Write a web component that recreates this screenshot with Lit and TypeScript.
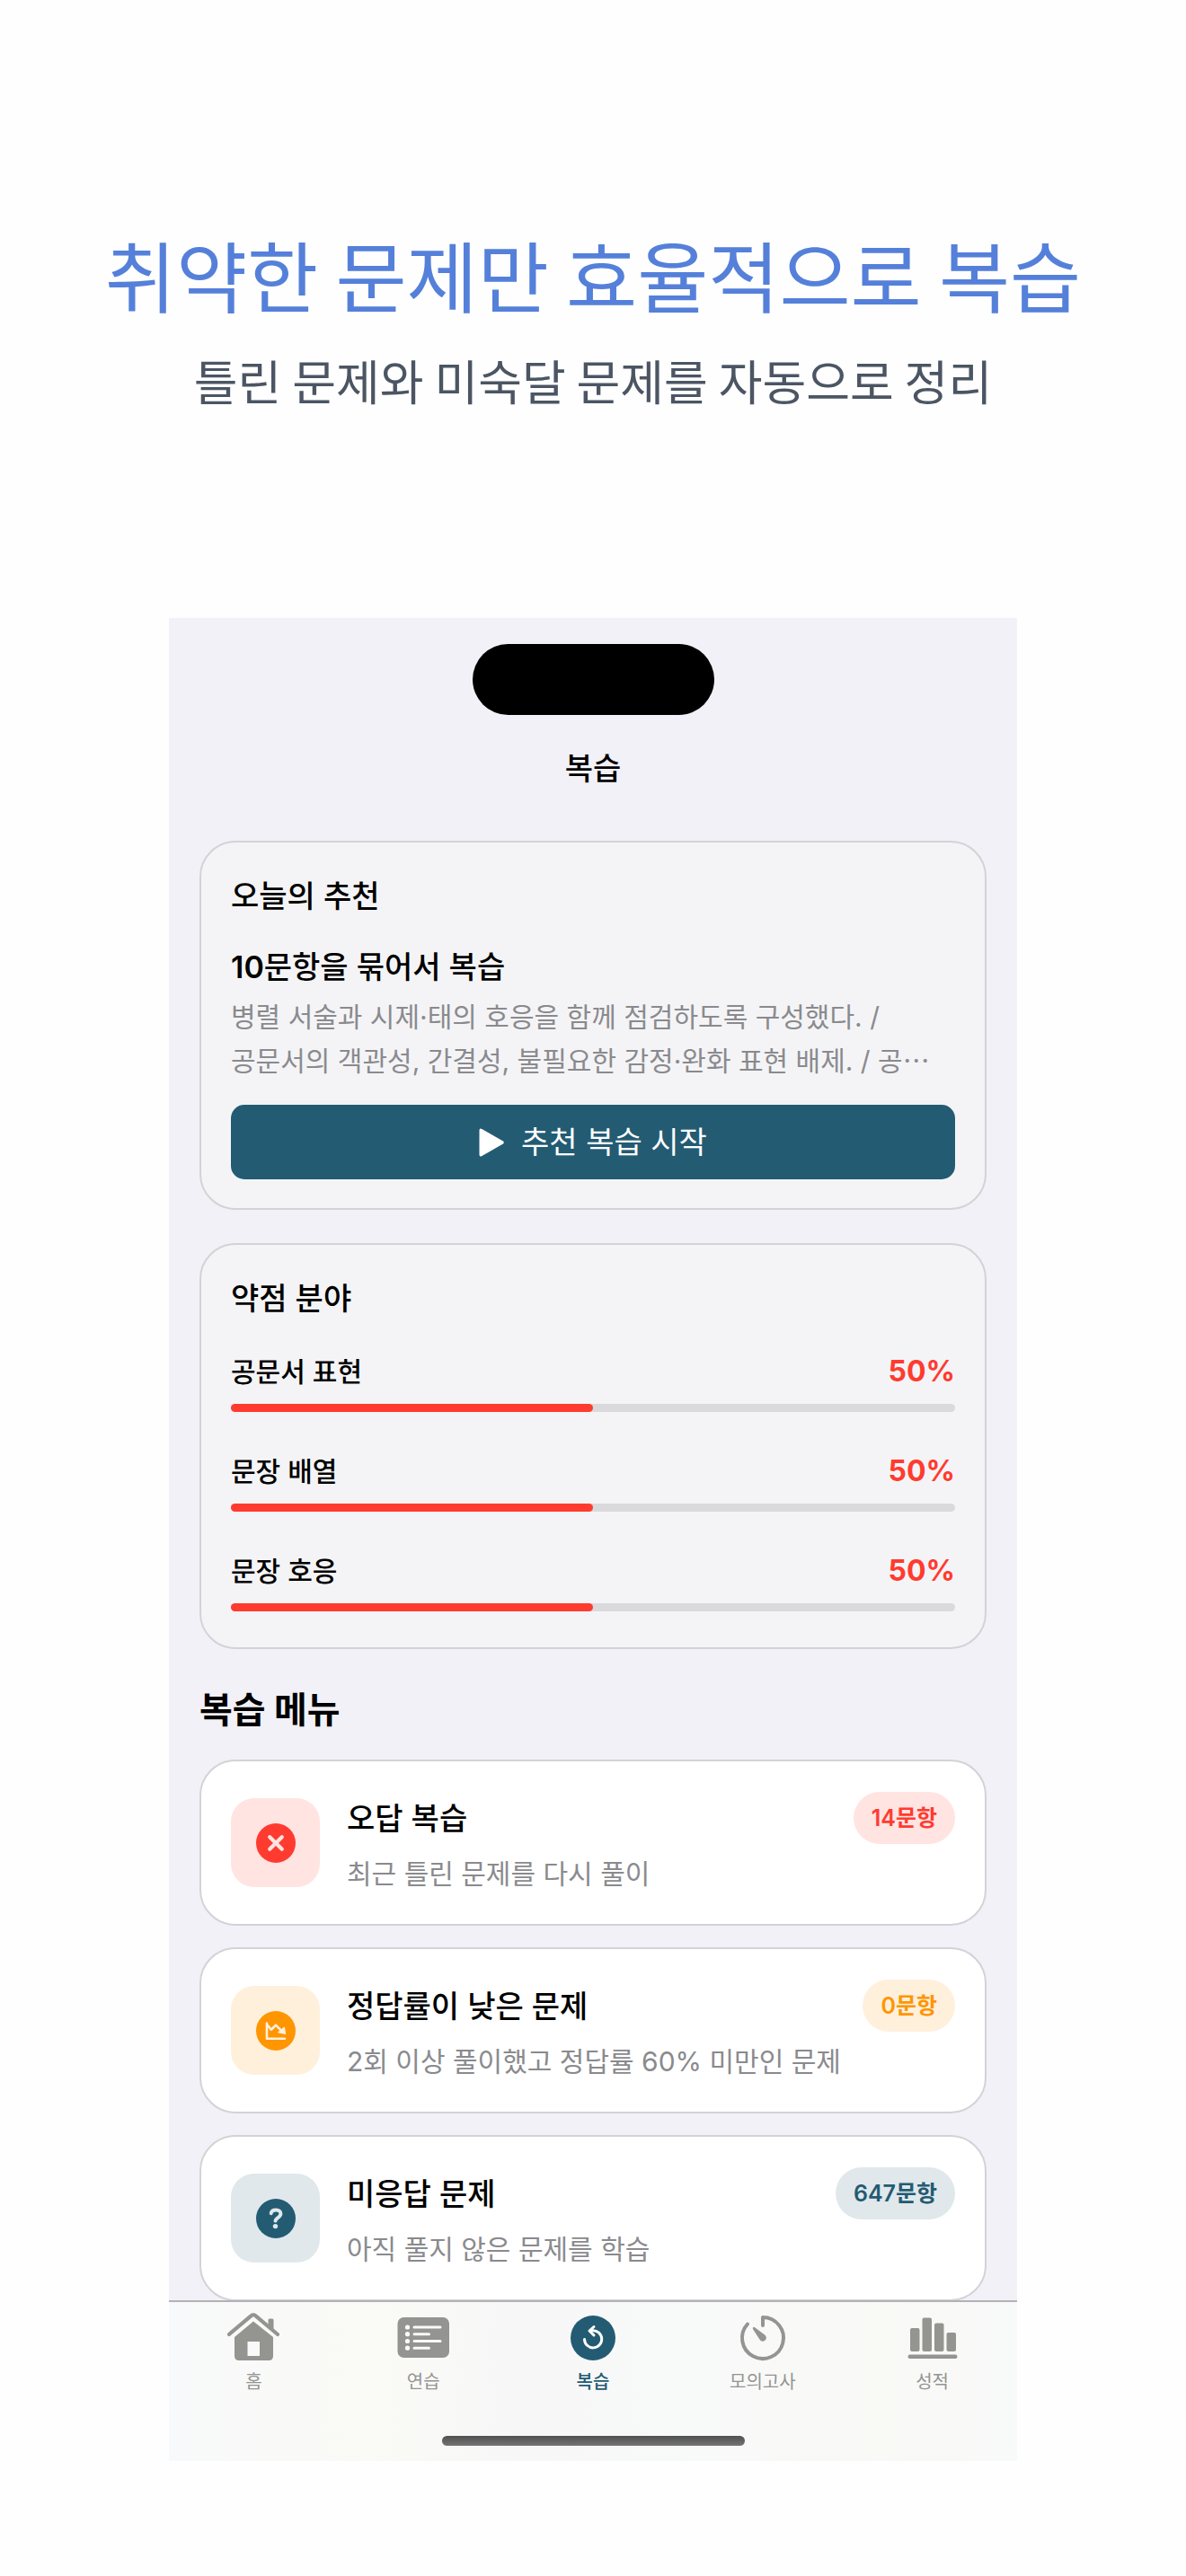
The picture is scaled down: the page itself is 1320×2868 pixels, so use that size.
import { LitElement, html, css, svg } from "lit";
import { customElement } from "lit/decorators.js";

const icons = {
  wrong: svg`<circle cx="22" cy="22" r="22" fill="#ff3b30"/><path d="M15.200 15.200l13.600 13.600M28.800 15.200l-13.600 13.600" stroke="#ffe4e2" stroke-width="4.200" stroke-linecap="round"/>`,
  low: svg`<circle cx="22" cy="22" r="22" fill="#ff9500"/><path d="M12 13.500v17.200h20" fill="none" stroke="#fff0dc" stroke-width="2.600" stroke-linecap="round" stroke-linejoin="round"/><path d="M12.500 15.500l4.300 5.200 5.200-5 6 6" fill="none" stroke="#fff0dc" stroke-width="2.600" stroke-linejoin="round"/><path d="M32.600 25.300l-7.800-1.600 6.600-5.400z" fill="#fff0dc" stroke="#fff0dc" stroke-width="1.200" stroke-linejoin="round"/>`,
  open: svg`<circle cx="22" cy="22" r="22" fill="#235b73"/><path d="M16.700 16.200c.5-2.600 2.800-3.700 5.500-3.700 3 0 5.200 1.600 5.200 4.300 0 4.200-5.700 4.200-5.900 7.800" fill="none" stroke="#e0e8eb" stroke-width="4" stroke-linecap="round"/><circle cx="21.500" cy="30.600" r="2.700" fill="#e0e8eb"/>`,
};

const tabIcons = {
  home: svg`<path d="M2 25L26.700 4.200a3.400 3.400 0 0 1 4.600 0L56 25" transform="translate(0 -1)" fill="none" stroke="#949490" stroke-width="4.200" stroke-linecap="round"/><path d="M45.500 15V8q0-1.500 1.500-1.500h3q1.500 0 1.500 1.500v13z" fill="#949490"/><path fill-rule="evenodd" d="M8 27L29 9.500 51 27v21q0 5-5 5H13q-5 0-5-5zM22.500 32v16h13.500V32z" fill="#949490"/>`,
  list: svg`<rect x="0.500" y="5" width="57.500" height="45" rx="7" fill="#949492"/><g fill="#fafafa"><circle cx="11.500" cy="16" r="2.600"/><circle cx="11.500" cy="23.700" r="2.600"/><circle cx="11.500" cy="31.500" r="2.600"/><circle cx="11.500" cy="39.200" r="2.600"/></g><path d="M19 16h29M19 23.700h16.500M19 31.500h29M19 39.200h16.500" stroke="#fafafa" stroke-width="3" stroke-linecap="round"/>`,
  review: svg`<circle cx="29" cy="28" r="25" fill="#235b73"/><path d="M19.500 29.500a9.600 9.600 0 1 0 9-9.800h-2" fill="none" stroke="#fff" stroke-width="3" stroke-linecap="round"/><path d="M30 15.500l-5 4.500 5 5" fill="none" stroke="#fff" stroke-width="3" stroke-linecap="round" stroke-linejoin="round"/>`,
  timer: svg`<path d="M29 14V5A23 23 0 1 1 12 12.500" fill="none" stroke="#949492" stroke-width="4" stroke-linecap="round" stroke-linejoin="round"/><path d="M18.200 16.200q-.8 1 0 2.200l7.500 11.500a3.900 3.900 0 1 0 5.400-5.400l-11-8.300q-1.100-.8-1.900 0z" fill="#949492"/>`,
  chart: svg`<g fill="#949490"><rect x="4" y="17" width="10.500" height="26" rx="2"/><rect x="17.500" y="5.500" width="10.500" height="37.500" rx="2"/><rect x="31" y="11.500" width="10.500" height="31.500" rx="2"/><rect x="44.500" y="22" width="10.500" height="21" rx="2"/><rect x="1.500" y="46.500" width="55" height="4.500" rx="2.200"/></g>`,
};

@customElement("app-root")
export class AppRoot extends LitElement {
  static styles = css`
    :host {
      display: block;
      min-height: 100vh;
      background: #fefefe;
      color: #000;
      font-family: Inter, "Noto Sans CJK KR", sans-serif;
      box-sizing: border-box;
    }
    * { box-sizing: border-box; }
    h1, h2, h3, p, ul { margin: 0; padding: 0; }
    ul { list-style: none; }
    svg { display: block; }
    .intro { padding: 243px 24px 225px; text-align: center; }
    .headline { font-size: 86px; line-height: 124px; font-weight: 400; color: #5580da; font-family: "Noto Sans CJK KR", sans-serif; }
    .tagline { margin-top: 16px; font-size: 53px; line-height: 80px; color: #4b5563; font-family: "Noto Sans CJK KR", sans-serif; }
    .screen { margin: 0 188px; background: #f2f1f7; padding-top: 29px; }
    .island { width: 269px; height: 79px; border-radius: 40px; background: #000; margin: 0 auto; }
    .title { margin-top: 34px; text-align: center; font-size: 34px; line-height: 52px; font-weight: 500; }
    .content { padding: 54px 34px 0; display: flex; flex-direction: column; }
    .card { border: 2px solid #d3d3d7; border-radius: 40px; background: #f4f4f6; padding: 34px 33px 32px; }
    .card + .card { margin-top: 37px; }
    .heading { font-size: 34px; line-height: 52px; font-weight: 500; }
    .pick { margin-top: 27px; font-size: 34px; line-height: 52px; font-weight: 500; }
    .count { font-weight: 600; }
    .desc { margin-top: 5px; font-size: 30px; line-height: 49px; color: #8a8a8e; white-space: nowrap; }
    .start { margin-top: 24px; width: 100%; height: 83px; border: 0; border-radius: 15px; background: #235b73; color: #fff; display: flex; align-items: center; justify-content: center; gap: 19px; font: inherit; font-size: 34px; line-height: 52px; }
    .areas { margin-top: 32px; padding-bottom: 8px; display: grid; gap: 43px; }
    .row { display: flex; justify-content: space-between; align-items: center; font-size: 30px; line-height: 46px; font-weight: 500; }
    .percent { color: #ff3b30; font-size: 32px; font-weight: 700; }
    .track { margin-top: 13px; height: 9px; border-radius: 5px; background: #dadadc; }
    .fill { height: 9px; border-radius: 5px; background: #ff3b30; }
    .section { margin: 38px 0 25px; font-size: 40px; line-height: 60px; font-weight: 700; }
    .menu { display: grid; gap: 24px; }
    .item { width: 100%; height: 185px; display: flex; align-items: center; border: 2px solid #d3d3d7; border-radius: 40px; background: #fff; padding: 0 33px; font: inherit; color: inherit; text-align: left; text-decoration: none; }
    .tile { width: 99px; height: 99px; border-radius: 26px; display: grid; place-items: center; flex: none; }
    .words { flex: 1; margin-left: 30px; padding-top: 4px; }
    .name { display: block; font-size: 34px; line-height: 52px; font-weight: 500; }
    .note { display: block; margin-top: 12px; font-size: 30px; line-height: 46px; color: #8a8a8e; white-space: nowrap; }
    .badge { align-self: flex-start; margin-top: 34px; height: 58px; border-radius: 29px; padding: 0 20px; font-size: 25px; line-height: 58px; font-weight: 600; white-space: nowrap; }
    .red { background: #ffe4e2; color: #ff3b30; }
    .orange { background: #fff0dc; color: #ff9500; }
    .teal { background: #e0e8eb; color: #235b73; }
    .tabs { border-top: 2px solid #b2b2b6; background: linear-gradient(90deg, #f8f9fa, #fafaf6 24%, #f7f7f8 42%, #f8f9f9 62%, #f9f9f6 84%, #f8f9f9); padding: 12px 0 17px; margin-top: -1px; position: relative; }
    .tablist { display: grid; grid-template-columns: repeat(5, 1fr); }
    .tab { display: flex; flex-direction: column; align-items: center; gap: 6px; color: #949492; font-size: 20px; line-height: 30px; text-decoration: none; }
    .active { color: #235b73; font-weight: 500; }
    .bar { width: 337px; height: 11px; border-radius: 6px; background: linear-gradient(#505050, #747474); margin: 45px auto 0; }
  `;

  private areas = [
    { name: "공문서 표현", value: 50 },
    { name: "문장 배열", value: 50 },
    { name: "문장 호응", value: 50 },
  ];

  private items = [
    { name: "오답 복습", note: "최근 틀린 문제를 다시 풀이", count: 14, tone: "red", icon: icons.wrong },
    { name: "정답률이 낮은 문제", note: "2회 이상 풀이했고 정답률 60% 미만인 문제", count: 0, tone: "orange", icon: icons.low },
    { name: "미응답 문제", note: "아직 풀지 않은 문제를 학습", count: 647, tone: "teal", icon: icons.open },
  ];

  private tabs = [
    { name: "홈", icon: tabIcons.home, active: false },
    { name: "연습", icon: tabIcons.list, active: false },
    { name: "복습", icon: tabIcons.review, active: true },
    { name: "모의고사", icon: tabIcons.timer, active: false },
    { name: "성적", icon: tabIcons.chart, active: false },
  ];

  render() {
    return html`
      <header class="intro">
        <h1 class="headline">취약한 문제만 효율적으로 복습</h1>
        <p class="tagline">틀린 문제와 미숙달 문제를 자동으로 정리</p>
      </header>
      <main class="screen">
        <div class="island"></div>
        <h2 class="title">복습</h2>
        <div class="content">
          <section class="card">
            <h3 class="heading">오늘의 추천</h3>
            <p class="pick"><span class="count">10</span>문항을 묶어서 복습</p>
            <p class="desc">병렬 서술과 시제·태의 호응을 함께 점검하도록 구성했다. /<br />공문서의 객관성, 간결성, 불필요한 감정·완화 표현 배제. / 공⋯</p>
            <button class="start" type="button">
              <svg width="28" height="32" viewBox="0 0 28 32"><path d="M.5 2.800Q.5-.6 3.400 1L26.500 14.200q2.600 1.800 0 3.600L3.400 31Q.5 32.600.5 29.200z" fill="#fff"/></svg>
              <span>추천 복습 시작</span>
            </button>
          </section>
          <section class="card">
            <h3 class="heading">약점 분야</h3>
            <div class="areas">
              ${this.areas.map((a) => html`<div>
                <div class="row"><span>${a.name}</span><span class="percent">${a.value}%</span></div>
                <div class="track"><div class="fill" style="width:${a.value}%"></div></div>
              </div>`)}
            </div>
          </section>
          <h3 class="section">복습 메뉴</h3>
          <ul class="menu">
            ${this.items.map((i) => html`<li><a class="item" href="#">
              <span class="tile ${i.tone}"><svg width="44" height="44" viewBox="0 0 44 44">${i.icon}</svg></span>
              <span class="words"><span class="name">${i.name}</span><span class="note">${i.note}</span></span>
              <span class="badge ${i.tone}">${i.count}문항</span>
            </a></li>`)}
          </ul>
        </div>
        <nav class="tabs">
          <div class="tablist">
            ${this.tabs.map((t) => html`<a class="tab ${t.active ? "active" : ""}" href="#">
              <svg width="58" height="56" viewBox="0 0 58 56">${t.icon}</svg>
              <span>${t.name}</span>
            </a>`)}
          </div>
          <div class="bar"></div>
        </nav>
      </main>
    `;
  }
}
